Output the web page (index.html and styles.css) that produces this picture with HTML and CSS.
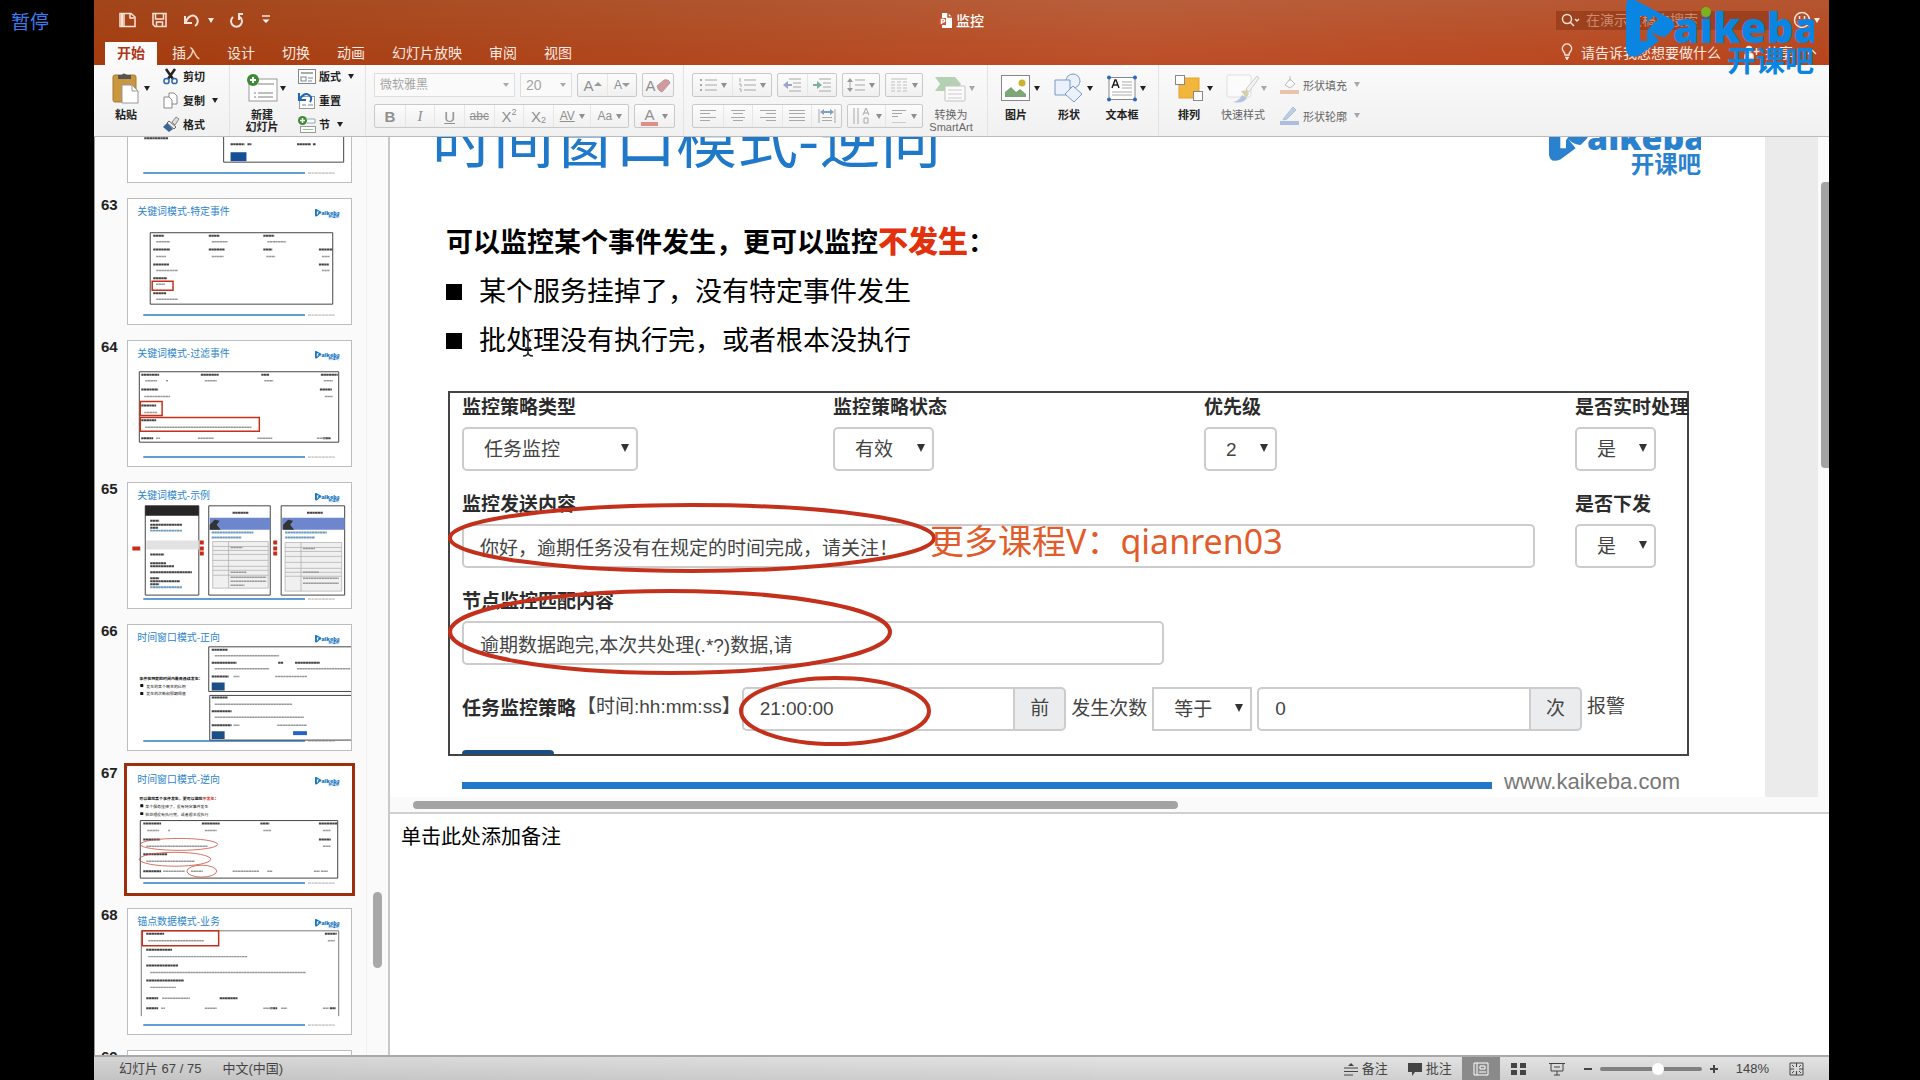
FILE: index.html
```html
<!DOCTYPE html>
<html lang="zh-CN">
<head>
  <meta charset="UTF-8" />
  <meta name="viewport" content="width=device-width, initial-scale=1.0"/>
  <title>监控</title>
  <link rel="stylesheet" href="styles.css">
</head>
<body>

<!-- Shared shapes -->
<svg class="defs" width="0" height="0" aria-hidden="true">
  <symbol id="logo" viewBox="0 0 188 76">
    <path fill-rule="evenodd" d="M0 6Q1-3 9 1L45 20Q52 26 45 32L39 38Q31 38 24 31L33 42L14 56Q1 61 0 50ZM14 17V42H21V32L24 28L32 20L28 17L21 24V17Z"/>
    <text class="logo-en" x="47" y="44">aikeba</text>
    <text class="logo-cn" x="188" y="73" text-anchor="end">开课吧</text>
  </symbol>
  <symbol id="mini" viewBox="0 0 224 126">
    <path d="M15 117H178" stroke="#2b7fc9" stroke-width="1.5"/>
    <path d="M181 117H208" stroke="#aaa" stroke-width="1" stroke-dasharray="3 .5"/>
    <svg x="188" y="10" width="25" height="10"><use href="#logo" fill="#1676c4"/></svg>
  </symbol>
</svg>

<span class="paused">暂停</span>

<div class="window">
  <header class="titlebar">
    <div class="title-row">
      <div class="quick">
        <button aria-label="侧栏"><svg width="17" height="16" viewBox="0 0 17 16"><path d="M1 1.500h11l4 3.500v9.500H1zM5 1.500v13"/><path d="M2 2h2v12H2z" fill="#fbe3da" stroke="none"/><path d="M11 2v4h4"/></svg></button>
        <button aria-label="保存"><svg width="17" height="16" viewBox="0 0 17 16"><path d="M2 1.500h13v13H4l-2-2zM4.500 2v5h8V2M5.500 14v-4h6v4"/></svg></button>
        <button aria-label="撤销"><svg width="17" height="16" viewBox="0 0 17 16"><path d="M2 4v7h7M2.500 10.500C5 4 10 2 13 5s2 7-1 9" stroke-width="2"/></svg><i class="caret"></i></button>
        <button aria-label="重做"><svg width="16" height="16" viewBox="0 0 16 16"><path d="M4 5a5.500 5.500 0 1 0 7 0M10 8V2h4" stroke-width="2"/></svg></button>
        <button aria-label="自定义"><svg width="12" height="12" viewBox="0 0 12 12"><path d="M2 2h8" /><path d="M2.500 5.500h7L6 9z" fill="#fff" stroke="none"/></svg></button>
      </div>
      <div class="doc-name">
        <svg width="13" height="15" viewBox="0 0 13 15"><path d="M3 0h6l4 4v11H3z" fill="#fff"/><path d="M9 0v4h4" fill="none" stroke="#b5532c"/><path d="M0 5h7v7H0z" fill="#d35230"/><path d="M2.500 11V6.500h2a1.200 1.200 0 0 1 0 2.500h-2" fill="none" stroke="#fff"/></svg>
        监控
      </div>
      <div class="side">
        <label class="search">
          <svg width="20" height="14" viewBox="0 0 20 14"><circle cx="6" cy="6" r="4.500"/><path d="M9 9l4 4M14 6l2 2 2-2"/></svg>
          <input type="text" placeholder="在演示文稿中搜索" aria-label="搜索">
        </label>
        <button aria-label="反馈"><svg width="18" height="18" viewBox="0 0 18 18"><circle cx="9" cy="9" r="7.500"/><path d="M6.500 5v3M11.500 5v3M5 10.500q4 4 8 0"/></svg><i class="caret"></i></button>
      </div>
    </div>
    <div class="tab-row">
      <nav class="tabs">
        <button class="active">开始</button>
        <button>插入</button>
        <button>设计</button>
        <button>切换</button>
        <button>动画</button>
        <button>幻灯片放映</button>
        <button>审阅</button>
        <button>视图</button>
      </nav>
      <div class="side">
        <button class="tell"><svg width="12" height="17" viewBox="0 0 12 17"><path d="M4 12Q4 10 2.500 8.500A4.600 4.600 0 1 1 9.500 8.500Q8 10 8 12ZM4 14.500h4M5 16h2"/></svg>请告诉我您想要做什么</button>
        <button class="share"><svg width="16" height="14" viewBox="0 0 16 14"><circle cx="5" cy="4" r="2.500" fill="#fff"/><path d="M1 13v-2q0-3 4-3t4 3v2z" fill="#fff"/><path d="M12.500 3v7M9.500 6.500h6"/></svg>共享</button>
        <button aria-label="折叠功能区"><svg width="10" height="8" viewBox="0 0 10 8"><path d="M1 6l4-4 4 4"/></svg></button>
      </div>
    </div>
  </header>

  <div class="ribbon">
    <div class="group">
      <button class="big">
        <svg width="28" height="32" viewBox="0 0 28 32"><rect x="1" y="3" width="23" height="27" rx="2" fill="#c8973f" stroke="#a67a2c"/><path d="M6 7V3h4q1-3 5 0h4v4z" fill="#555"/><path d="M10 13h10l6 6v12H10z" fill="#fff" stroke="#999"/><path d="M20 13v6h6" fill="none" stroke="#999"/></svg>
        <i class="caret"></i><span>粘贴</span>
      </button>
      <div class="stack">
        <button><svg width="18" height="17" viewBox="0 0 18 17"><path d="M4 1l7 10M13 1L6 11" stroke="#222" stroke-width="2.500" fill="none"/><circle cx="4.500" cy="13" r="2.600" fill="none" stroke="#2c67ae" stroke-width="1.500"/><circle cx="12.500" cy="13" r="2.600" fill="none" stroke="#2c67ae" stroke-width="1.500"/></svg>剪切</button>
        <button><svg width="18" height="17" viewBox="0 0 18 17"><path d="M7 1h5l3 3v8H7z" fill="#fff" stroke="#888"/><path d="M2 5h5l3 3v8H2z" fill="#fff" stroke="#888"/></svg>复制<i class="caret"></i></button>
        <button><svg width="18" height="17" viewBox="0 0 18 17"><path d="M10 6l4-5 3 2-4 6z" fill="#ddd" stroke="#888"/><path d="M7 5l7 6-2 2-7-6z" fill="#eee" stroke="#666"/><path d="M5 7l6 6-4 3-6-5z" fill="#3d6498"/></svg>格式</button>
      </div>
    </div>
    <div class="group group-slides">
      <button class="big">
        <svg width="32" height="30" viewBox="0 0 32 30"><rect x="3" y="6" width="28" height="22" fill="#fff" stroke="#999"/><path d="M12 11h16M8 20h2M12 20h15M8 24h2M12 24h15" stroke="#aaa" stroke-width="1.500"/><circle cx="7" cy="7" r="6" fill="#3f8a35"/><path d="M7 4v6M4 7h6" stroke="#fff" stroke-width="2"/></svg>
        <i class="caret"></i><span>新建<br>幻灯片</span>
      </button>
      <div class="stack">
        <button><svg width="18" height="15" viewBox="0 0 18 15"><rect x=".5" y=".5" width="17" height="14" fill="#fff" stroke="#888"/><path d="M3 4h12" stroke="#aaa" stroke-width="2"/><rect x="3" y="8" width="5" height="4" fill="none" stroke="#789"/><path d="M10 9h5M10 12h4" stroke="#789"/></svg>版式<i class="caret"></i></button>
        <button><svg width="18" height="17" viewBox="0 0 18 17"><rect x="1.500" y="4.500" width="15" height="12" fill="#fff" stroke="#999"/><path d="M4 13h4M10 13h5" stroke="#789"/><path d="M1 1v7h7M2 7q4-7 9-4 4 3 1 7" fill="none" stroke="#1f66b5" stroke-width="2"/></svg>重置</button>
        <button><svg width="18" height="17" viewBox="0 0 18 17"><path d="M9 3h8v4H9" fill="#fff" stroke="#8ab"/><rect x="2.500" y="10.500" width="15" height="6" fill="#fff" stroke="#999"/><path d="M5 13.500h10" stroke="#8c8"/><circle cx="4.500" cy="4.500" r="4.500" fill="#3f8a35"/><path d="M4.500 2v5M2 4.500h5" stroke="#fff" stroke-width="1.500"/></svg>节<i class="caret"></i></button>
      </div>
    </div>

    <div class="group group-font">
      <div class="rows">
        <div class="row">
          <span class="pick pick-font"><select aria-label="字体"><option>微软雅黑</option></select></span>
          <span class="pick pick-size"><select aria-label="字号"><option>20</option></select></span>
          <div class="seg seg-60">
            <button aria-label="增大字号">A<svg width="8" height="10" viewBox="0 0 8 10"><path d="M0 6l4-4 4 4z" fill="#999" stroke="none"/></svg></button>
            <button class="small" aria-label="减小字号">A<svg width="8" height="10" viewBox="0 0 8 10"><path d="M0 3l4 4 4-4z" fill="#999" stroke="none"/></svg></button>
          </div>
          <div class="seg seg-32"><button class="clear" aria-label="清除格式">A<svg width="15" height="15" viewBox="0 0 15 15"><path d="M1 8l7-6q5-1 6 3l-8 9q-4-1-5-6z" fill="#cf9aa0" stroke="#b99"/></svg></button></div>
        </div>
        <div class="row">
          <div class="seg seg-style">
            <button><b>B</b></button><button class="serif"><em>I</em></button><button><u>U</u></button><button><s>abc</s></button><button>X<sup>2</sup></button><button>X<sub>2</sub></button><button class="track"><u>AV</u><i class="caret"></i></button><button class="track">Aa<i class="caret"></i></button>
          </div>
          <div class="seg seg-color"><button class="color"><span>A</span><i class="caret"></i></button></div>
        </div>
      </div>
    </div>

    <div class="group group-para">
      <div class="rows">
        <div class="row">
          <div class="seg seg-80">
            <button aria-label="项目符号"><svg width="18" height="16" viewBox="0 0 18 16"><path d="M6 3h12M6 8h12M6 13h12"/><path d="M1 3h2M1 8h2M1 13h2" stroke-width="2"/></svg><i class="caret"></i></button>
            <button aria-label="编号"><svg width="18" height="16" viewBox="0 0 18 16"><path d="M6 3h12M6 8h12M6 13h12M2 1v4M1 7h2v3M1 12h2v3"/></svg><i class="caret"></i></button>
          </div>
          <div class="seg seg-60">
            <button aria-label="减少缩进"><svg width="18" height="16" viewBox="0 0 18 16"><path d="M6 2h12M10 6h8M10 10h8M6 14h12"/><path d="M0 8l5-4v3h4v2H5v3z" fill="#99a6cf" stroke="none"/></svg></button>
            <button aria-label="增加缩进"><svg width="18" height="16" viewBox="0 0 18 16"><path d="M6 2h12M10 6h8M10 10h8M6 14h12"/><path d="M9 8L4 4v3H0v2h4v3z" fill="#7fae9c" stroke="none"/></svg></button>
          </div>
          <div class="seg seg-38"><button aria-label="行距"><svg width="18" height="16" viewBox="0 0 18 16"><path d="M8 3h10M8 8h10M8 13h10M3 2v12"/><path d="M0 5l3-4 3 4zM0 11l3 4 3-4z" fill="#999" stroke="none"/></svg><i class="caret"></i></button></div>
          <div class="seg seg-38"><button aria-label="分栏"><svg width="18" height="16" viewBox="0 0 18 16"><path d="M1 2h16M1 5h4M1 8h4M1 11h4M1 14h4M7 5h4M7 8h4M7 11h4M7 14h4M13 5h4M13 8h4M13 11h4M13 14h4" stroke="#c0c0c0"/></svg><i class="caret"></i></button></div>
        </div>
        <div class="row">
          <div class="seg seg-150">
            <button aria-label="左对齐"><svg width="16" height="14" viewBox="0 0 16 14"><path d="M0 1.500h16M0 4.500h10M0 8.500h16M0 11.500h10"/></svg></button>
            <button aria-label="居中"><svg width="16" height="14" viewBox="0 0 16 14"><path d="M1 1.500h14M3 4.500h10M1 8.500h14M3 11.500h10"/></svg></button>
            <button aria-label="右对齐"><svg width="16" height="14" viewBox="0 0 16 14"><path d="M0 1.500h16M6 4.500h10M0 8.500h16M6 11.500h10"/></svg></button>
            <button aria-label="两端对齐"><svg width="16" height="14" viewBox="0 0 16 14"><path d="M0 1.500h16M0 4.500h16M0 8.500h16M0 11.500h16"/></svg></button>
            <button aria-label="分散对齐"><svg width="18" height="16" viewBox="0 0 18 16"><path d="M1 1v14M17 1v14M4 9.500h10M4 12.500h10"/><path d="M2 4l4-3v2h6V1l4 3-4 3V5H6v2z" fill="#7f9fc4" stroke="none"/></svg></button>
          </div>
          <div class="seg seg-76">
            <button aria-label="文字方向"><svg width="20" height="18" viewBox="0 0 20 18"><path d="M2 1v16M6 1v16M11 8l3-7 3 7M12 6h4M12 11h4v5h-4z"/></svg><i class="caret"></i></button>
            <button aria-label="对齐文本"><svg width="16" height="16" viewBox="0 0 16 16"><path d="M1 2.500h14M1 5.500h10M1 8.500h6"/><path d="M1 14.500h14" stroke="#ccc"/></svg><i class="caret"></i></button>
          </div>
        </div>
      </div>
      <button class="big off">
        <svg width="32" height="28" viewBox="0 0 32 28"><path d="M0 3h20l6 7-6 7H0l5-7z" fill="#7fb07a"/><rect x="10" y="12" width="20" height="15" rx="1" fill="#fff" stroke="#999"/><path d="M13 16h14M13 20h14M13 24h14" stroke="#aaa"/></svg>
        <i class="caret"></i><span>转换为<br>SmartArt</span>
      </button>
    </div>

    <div class="group">
      <button class="big">
        <svg width="30" height="27" viewBox="0 0 30 27"><rect x=".5" y=".5" width="28" height="25" fill="#fff" stroke="#888"/><path d="M4 22v-5l6-5 5 5 4-3 6 5v3z" fill="#7fa676"/><circle cx="21" cy="8" r="3.500" fill="#cdb430"/></svg>
        <i class="caret"></i><span>图片</span>
      </button>
      <button class="big">
        <svg width="30" height="30" viewBox="0 0 30 30"><g fill="#eaf1fb" stroke="#7d97c9"><circle cx="19" cy="8" r="7"/><path d="M1 7h15v15H1z"/><path d="M19 13l9 8-8 8-9-8z"/></g></svg>
        <i class="caret"></i><span>形状</span>
      </button>
      <button class="big">
        <svg width="30" height="27" viewBox="0 0 30 27"><rect x="2" y="2.500" width="26" height="22" fill="#fff" stroke="#888"/><path d="M5 13l3-8h1l3 8M6 10h5" stroke="#222" stroke-width="1.500" fill="none"/><path d="M15 7h10M15 10h10M15 13h10M5 17h20M5 20h20" stroke="#aaa"/><g fill="#2b68bb"><circle cx="2" cy="2.500" r="2"/><circle cx="28" cy="2.500" r="2"/><circle cx="2" cy="24.500" r="2"/><circle cx="28" cy="24.500" r="2"/></g></svg>
        <i class="caret"></i><span>文本框</span>
      </button>
    </div>

    <div class="group last">
      <button class="big">
        <svg width="30" height="28" viewBox="0 0 30 28"><rect x="5" y="4" width="20" height="20" fill="#f2b63c" stroke="#e3a32a"/><rect x="1.500" y="1.500" width="9" height="9" fill="#fff" stroke="#888"/><rect x="19.500" y="17.500" width="9" height="9" fill="#fff" stroke="#888"/></svg>
        <i class="caret"></i><span>排列</span>
      </button>
      <button class="big off">
        <svg width="34" height="30" viewBox="0 0 34 30"><rect x="1" y="2" width="24" height="22" rx="2" fill="#fff" stroke="#ccc"/><path d="M20 16L31 3l2 2-10 14z" fill="#eee" stroke="#aaa"/><path d="M15 18l6-1 2 4-3 4z" fill="#b9b36a"/><path d="M7 29q6-1 9-7l5 3q-4 6-14 4z" fill="#7f9bd0"/></svg>
        <i class="caret"></i><span>快速样式</span>
      </button>
      <div class="stack two off">
        <button><svg width="20" height="20" viewBox="0 0 20 20"><path d="M5 10l5-6 5 5-5 4z" fill="#fff" stroke="#888"/><path d="M10 1v5" stroke="#888"/><rect x="0" y="15" width="19" height="4" fill="#e09a72"/></svg>形状填充<i class="caret"></i></button>
        <button><svg width="20" height="20" viewBox="0 0 20 20"><path d="M4 12L13 1l3 3-9 9-4 1z" fill="#8ab0dd" stroke="#79a"/><rect x="0" y="15" width="19" height="4" fill="#7593cc"/></svg>形状轮廓<i class="caret"></i></button>
      </div>
    </div>
  </div>

  <main class="workspace">
    <aside class="sidebar">
      <ol class="thumbs">
        <li>
          <span class="num"></span>
          <svg class="thumb" viewBox="0 0 224 126"><use href="#mini"/>
            <path class="frame" d="M96 60H217V106H96z"/><path class="tx" d="M103 88h14M120 88h4M170 88h14M186 88h3M16 82h24"/><rect x="103" y="96" width="16" height="9" fill="#174f96"/>
          </svg>
        </li>
        <li>
          <span class="num">63</span>
          <svg class="thumb" viewBox="0 0 224 126"><use href="#mini"/>
            <text x="9" y="16">关键词模式-特定事件</text>
            <path class="frame" d="M22 34H206V106H22z"/>
            <path class="tx" d="M25 37h11M81 37h11M136 37h11M25 51h17M81 51h16M136 51h9M192 51h14M25 66h16M192 66h10M25 80h14M25 95h13"/>
            <path class="tx light" d="M28 43h14M84 43h16M140 43h19M28 58h10M84 58h12M139 58h9M195 58h8M28 72h22M195 72h8M28 86h9M28 101h22"/>
            <path class="red" d="M24 83H45V92H24z"/>
          </svg>
        </li>
        <li>
          <span class="num">64</span>
          <svg class="thumb" viewBox="0 0 224 126"><use href="#mini"/>
            <text x="9" y="16">关键词模式-过滤事件</text>
            <path class="frame" d="M11 31H212V102H11z"/>
            <path class="tx" d="M13 34h18M73 34h18M134 34h8M194 34h17M13 49h17M193 49h12M13 65h15M13 80h15M13 98h12M196 98h8"/>
            <path class="tx light" d="M17 40h12M38 40h2M77 40h12M137 40h9M197 40h9M16 56h26M198 56h8M16 72h13M17 87h107M28 98h4M70 98h16M130 98h15M190 98h9"/>
            <path class="red" d="M12 61H34V75H12zM12 77H132V91H12z"/>
          </svg>
        </li>
        <li>
          <span class="num">65</span>
          <svg class="thumb" viewBox="0 0 224 126"><use href="#mini"/>
            <text x="9" y="16">关键词模式-示例</text>
            <g class="frame"><path d="M17 23H71V113H17z"/><path d="M81 23H143V113H81z"/><path d="M154 23H218V113H154z"/></g>
            <path d="M17 23H71V33H17z" fill="#262626"/>
            <path d="M18 58H71V67H18z" fill="#e2e2e2"/>
            <path d="M82 35H143V47H82zM155 35H218V47H155z" fill="#6d86cd"/>
            <path d="M82 47V42l5-5 5 1-3 4 4 5zM156 47V42l5-5 5 1-3 4 4 5z" fill="#333"/>
            <path class="tx" d="M22 38h9M22 42h32M22 45h8M22 72h14M22 81h16M22 84h24M22 90h42M22 96h9M22 99h30M22 102h9M105 30h16M180 30h16"/>
            <path class="tx blue" d="M22 48h32M22 105h32M84 50h42M84 55h30M158 50h42M158 55h30"/>
            <g fill="#f0f0f0" stroke="#aaa" stroke-width=".7"><path d="M85 59H141V106H85zM158 60H215V109H158z"/><path d="M85 64h56M85 68h56M85 72h56M85 78h56M85 84h56M85 88h56M85 93h56M101 59v47M158 65h57M158 69h57M158 74h57M158 80h57M158 86h57M158 90h57M158 94h57M174 60v49"/></g>
            <path class="tx light" d="M103 65h12M103 90h16M103 95h36M103 99h36M103 103h14M176 66h12M176 90h16M176 96h36M176 101h36"/>
            <path d="M4 66h8M72 60h4M72 66h4M72 71h4M146 60h4M146 66h4M146 71h4" stroke="#c62d1c" stroke-width="4"/>
          </svg>
        </li>
        <li>
          <span class="num">66</span>
          <svg class="thumb" viewBox="0 0 224 126"><use href="#mini"/>
            <text x="9" y="16">时间窗口模式-正向</text>
            <path class="frame" d="M226 22H81V67H226M226 71H82V116H226"/>
            <text class="tiny" x="11" y="55"><tspan font-weight="bold">事件在特定的时间内是否连续发生：</tspan></text>
            <text class="tiny" x="18" y="63">发生的某个概率的比例</text>
            <text class="tiny" x="18" y="71">发生的次数和预期阈值</text>
            <path class="tx" d="M84 25h16M84 38h25M151 38h5M168 38h25M84 52h17M84 73h16M84 87h20M84 101h20"/>
            <path d="M12 61h3M12 69h3" stroke="#111" stroke-width="3"/>
            <path class="tx light" d="M87 31h65M87 44h55M170 44h54M106 52h6M148 52h32M87 80h78M87 93h90M106 101h6M150 101h30"/>
            <path d="M84 58H97V66H84zM84 107H97V115H84z" fill="#1c4f86"/><path d="M166 107h14v4h-14z" fill="#2564c4"/>
          </svg>
        </li>
        <li class="current">
          <span class="num">67</span>
          <svg class="thumb" viewBox="0 0 224 126"><use href="#mini"/>
            <text x="9" y="16">时间窗口模式-逆向</text>
            <text class="tiny" x="11" y="33"><tspan font-weight="bold">可以监控某个事件发生，更可以监控<tspan fill="#d6301c">不发生</tspan>：</tspan></text>
            <text class="tiny" x="17" y="41">某个服务挂掉了，没有特定事件发生</text>
            <text class="tiny" x="17" y="49">批处理没有执行完，或者根本没执行</text>
            <path d="M12 39h3M12 47h3" stroke="#111" stroke-width="3"/>
            <path class="frame" d="M12 54H211V112H12z"/>
            <path class="tx" d="M15 57h18M74 57h18M133 57h9M192 57h19M15 73h17M192 73h12M15 88h24M15 105h18"/>
            <path class="tx light" d="M19 64h12M40 64h2M77 64h12M136 64h8M196 64h8M18 80h62M196 80h8M18 95h49M35 105h22M63 105h12M105 105h27M140 105h5M187 105h6M194 105h7"/>
            <g fill="none" stroke="#c8503f" stroke-width=".8"><ellipse cx="51" cy="78" rx="39" ry="6"/><ellipse cx="47" cy="93" rx="36" ry="7"/><ellipse cx="74" cy="105" rx="15" ry="6"/></g>
          </svg>
        </li>
        <li>
          <span class="num">68</span>
          <svg class="thumb" viewBox="0 0 224 126"><use href="#mini"/>
            <text x="9" y="16">锚点数据模式-业务</text>
            <path d="M13 108V22H212V108" fill="none" stroke="#777"/>
            <path class="tx" d="M18 25h18M198 25h12M18 41h26M18 57h32M18 72h38M18 90h12M92 90h18M18 100h12M143 100h7M203 100h6"/>
            <path class="tx light" d="M20 32h56M201 32h7M20 48h100M22 64h157M22 79h26M34 90h28M33 100h4M77 100h12M136 100h10M154 100h6M196 100h6"/>
            <path class="red" d="M14 22H91V37H14z"/>
          </svg>
        </li>
        <li>
          <span class="num">69</span>
          <svg class="thumb" viewBox="0 0 224 126"><use href="#mini"/></svg>
        </li>
      </ol>
      <div class="track-v"><i></i></div>
    </aside>

    <section class="editor">
      <div class="canvas">
        <article class="slide">
          <div class="slide-head">
            <h1>时间窗口模式-逆向</h1>
            <svg class="slide-logo" viewBox="0 0 188 76"><use href="#logo"/></svg>
          </div>
          <h2>可以监控某个事件发生，更可以监控<strong>不发生</strong>：</h2>
          <ul>
            <li>某个服务挂掉了，没有特定事件发生</li>
            <li>批处理没有执行完，或者根本没执行</li>
          </ul>

          <form class="policy">
            <div class="field">
              <label for="type">监控策略类型</label>
              <span class="select w-type"><select id="type"><option>任务监控</option></select></span>
            </div>
            <div class="field">
              <label for="state">监控策略状态</label>
              <span class="select w-state"><select id="state"><option>有效</option></select></span>
            </div>
            <div class="field">
              <label for="level">优先级</label>
              <span class="select w-level"><select id="level"><option>2</option></select></span>
            </div>
            <div class="field">
              <label for="realtime">是否实时处理</label>
              <span class="select w-yes"><select id="realtime"><option>是</option></select></span>
            </div>
            <div class="field span-3">
              <label for="content">监控发送内容</label>
              <input id="content" type="text" value="你好，逾期任务没有在规定的时间完成，请关注！">
            </div>
            <div class="field">
              <label for="send">是否下发</label>
              <span class="select w-yes"><select id="send"><option>是</option></select></span>
            </div>
            <div class="field span-2">
              <label for="match">节点监控匹配内容</label>
              <input id="match" type="text" value="逾期数据跑完,本次共处理(.*?)数据,请">
            </div>
            <div class="inline">
              <label for="time">任务监控策略</label>
              <span class="hint">【时间:hh:mm:ss】</span>
              <div class="addon"><input id="time" type="text" value="21:00:00"><span>前</span></div>
              <label class="plain" for="op">发生次数</label>
              <span class="select square w-op"><select id="op"><option>等于</option></select></span>
              <div class="addon"><input type="text" value="0" aria-label="次数"><span>次</span></div>
              <span class="hint">报警</span>
            </div>
            <div class="submit-edge"></div>
            <svg class="marks" viewBox="0 0 1241 364">
              <ellipse cx="244" cy="147" rx="242" ry="33"/>
              <ellipse cx="222" cy="241" rx="220" ry="41"/>
              <ellipse cx="387" cy="320" rx="94" ry="33"/>
            </svg>
            <span class="promo">更多课程V：qianren03</span>
          </form>

          <footer class="slide-foot"><i></i><span>www.kaikeba.com</span></footer>
          <svg class="ibeam" width="12" height="28" viewBox="0 0 12 28"><path d="M1 1q5 0 5 4v18q0 4-5 4M11 1q-5 0-5 4M11 27q-5 0-5-4M3 19h6"/></svg>
        </article>
        <div class="track-canvas"><i></i></div>
      </div>
      <div class="track-h"><i></i></div>
      <div class="notes">单击此处添加备注</div>
    </section>
  </main>

  <footer class="status">
    <span>幻灯片 67 / 75</span>
    <span class="lang">中文(中国)</span>
    <div class="status-right">
      <button><svg width="14" height="14" viewBox="0 0 14 14"><path d="M0 6h14M0 9.500h14M0 13h9"/><path d="M4 4l3-3 3 3z" fill="#444" stroke="none"/></svg>备注</button>
      <button><svg width="14" height="14" viewBox="0 0 14 14"><path d="M0 1h14v9H7l-3 4v-4H0z" fill="#444" stroke="none"/></svg>批注</button>
      <div class="views">
        <button class="on" aria-label="普通视图"><svg width="16" height="14" viewBox="0 0 16 14"><path d="M1 1h14v12H1zM4 1v12M7 4h5v3H7zM6 10h7"/></svg></button>
        <button aria-label="浏览视图"><svg width="16" height="14" viewBox="0 0 16 14"><path d="M0 1h6v5H0zM9 1h6v5H9zM0 8h6v5H0zM9 8h6v5H9z" fill="#444" stroke="none"/></svg></button>
        <button aria-label="放映"><svg width="16" height="14" viewBox="0 0 16 14"><path d="M0 1.500h16M2 2v7h12V2M5 5h6M8 9v4M5 13h6"/></svg></button>
      </div>
      <button class="zoom-step" aria-label="缩小"><svg width="10" height="10" viewBox="0 0 10 10"><path d="M1 5h8" stroke-width="2"/></svg></button>
      <input type="range" min="0" max="100" value="58" aria-label="缩放">
      <button class="zoom-step" aria-label="放大"><svg width="10" height="10" viewBox="0 0 10 10"><path d="M1 5h8M5 1v8" stroke-width="2"/></svg></button>
      <span class="percent">148%</span>
      <button aria-label="适应窗口"><svg width="15" height="14" viewBox="0 0 15 14"><path d="M1 1h13v12H1zM7.500 1v4M7.500 9v4M1 7h4M10 7h4M3 3l2 2M12 3l-2 2M3 11l2-2M12 11l-2-2"/></svg></button>
    </div>
  </footer>
</div>

<svg class="watermark" viewBox="0 0 188 76"><use href="#logo"/><circle cx="80" cy="13" r="5"/></svg>

</body>
</html>
```
FILE: styles.css
```css
:root {
  --blue: #1f78c8;
  --red: #c3311c;
  --line: #ccc;
}

* {
  box-sizing: border-box;
}

body {
  margin: 0;
  height: 100vh;
  padding: 0 91px 0 94px;
  background: #000;
  font-family: "Liberation Sans", "Noto Sans CJK SC", sans-serif;
  font-size: 14px;
  color: #222;
  overflow: hidden;
}

button,
input,
select {
  font: inherit;
  color: inherit;
  margin: 0;
  padding: 0;
  border: none;
  background: none;
  outline: none;
}

button {
  display: flex;
  align-items: center;
}

select {
  appearance: none;
}

svg {
  flex: none;
}

.defs {
  position: absolute;
}

.paused {
  position: absolute;
  left: 11px;
  top: 10px;
  font-size: 19px;
  line-height: 26px;
  color: #3d7bea;
}

.window {
  display: flex;
  flex-direction: column;
  height: 100%;
  background: #fff;
}

.caret {
  width: 0;
  height: 0;
  border: 3px solid transparent;
  border-top: 5px solid currentColor;
  border-bottom: none;
}

/* Title bar */
.titlebar {
  color: #fbe9e2;
  background: linear-gradient(to right, rgba(140, 50, 0, 0.45), rgba(255, 255, 255, 0.06) 60%, transparent), linear-gradient(#b4552f, #b9431a);
}

.titlebar svg {
  fill: none;
  stroke: #fbe3da;
  stroke-width: 1.5;
}

.title-row {
  display: grid;
  grid-template-columns: 1fr auto 1fr;
  align-items: center;
  height: 40px;
}

.quick {
  display: flex;
  align-items: center;
  gap: 15px;
  padding-left: 25px;
}

.quick button {
  gap: 8px;
}

.doc-name {
  display: flex;
  align-items: center;
  gap: 4px;
  font-weight: 500;
  color: #fff;
}

.doc-name svg {
  stroke: none;
}

.side {
  display: flex;
  align-items: center;
  justify-self: end;
  width: 273px;
}

.search {
  display: flex;
  align-items: center;
  gap: 5px;
  width: 221px;
  height: 19px;
  padding-left: 5px;
  margin-right: 16px;
  background: #9c401d;
}

.search input {
  width: 180px;
}

.search input::placeholder {
  color: #cf8b70;
}

.side button {
  gap: 3px;
}

.tab-row {
  display: flex;
  justify-content: space-between;
  align-items: flex-end;
  height: 25px;
}

.tabs {
  display: flex;
  gap: 3px;
  padding-left: 11px;
}

.tabs button {
  height: 23px;
  padding: 0 12px 3px;
}

.tabs .active {
  background: #fbfbfb;
  color: #b0371a;
  font-weight: bold;
}

.tab-row .side {
  height: 25px;
  padding-bottom: 2px;
}

.side .tell {
  gap: 8px;
  padding-left: 5px;
  margin-right: 23px;
}

.side .share {
  gap: 5px;
  margin-right: 14px;
}

/* Ribbon */
.ribbon {
  display: flex;
  height: 72px;
  background: linear-gradient(#fafafa, #f1f1f1);
  border-bottom: 1px solid #bbb;
  font-size: 11px;
}

.group {
  display: flex;
  gap: 11px;
  padding: 0 11px;
  border-right: 1px solid #e3e3e3;
}

.group:first-child,
.group-slides {
  padding-left: 15px;
}

.group-font {
  padding: 0 8px;
}

.group-para {
  padding-left: 8px;
}

.last {
  padding-left: 13px;
  gap: 12px;
  border-right: none;
}

.big {
  display: grid;
  grid-template-columns: 34px 8px;
  grid-template-rows: 34px 24px;
  row-gap: 4px;
  align-content: start;
  justify-items: center;
  align-items: center;
  padding-top: 6px;
  line-height: 12px;
  font-weight: bold;
  white-space: nowrap;
}

.big span {
  align-self: start;
}

.stack button {
  height: 24px;
  gap: 3px;
  padding-bottom: 2px;
  font-weight: bold;
}

.stack .caret {
  margin-left: 4px;
}

.two {
  padding-top: 5px;
}

.two button {
  height: 31px;
}

.big.off,
.off button {
  font-weight: 400;
  color: #666;
}

.off svg,
.off .caret {
  opacity: 0.55;
}

.rows {
  display: flex;
  flex-direction: column;
  gap: 7px;
  padding-top: 8px;
}

.row {
  display: flex;
  gap: 5px;
  height: 24px;
  color: #8f8f8f;
}

.pick {
  position: relative;
  border: 1px solid #dedede;
  background: #fafafa;
  font-size: 12px;
  color: #a5a5a5;
}

.pick select {
  width: 100%;
  height: 22px;
  padding-left: 5px;
}

.pick::after {
  content: "";
  position: absolute;
  right: 5px;
  top: 9px;
  border: 3px solid transparent;
  border-top: 4px solid #aaa;
  border-bottom: none;
}

.pick-font {
  width: 141px;
}

.pick-size {
  width: 52px;
  font-size: 14px;
}

.seg {
  display: flex;
  border: 1px solid #c9c9c9;
  border-radius: 2px;
  background: linear-gradient(#fcfcfc, #f0f0f0);
  font-size: 15px;
}

.seg button {
  flex: 1 1 30px;
  justify-content: center;
  border-left: 1px solid #e6e6e6;
}

.seg button:first-child {
  border-left: none;
}

.seg svg {
  fill: none;
  stroke: #a8a8a8;
}

.seg .caret {
  margin-left: 4px;
}

.seg sup,
.seg sub {
  font-size: 9px;
  line-height: 9px;
}

.seg sup {
  align-self: flex-start;
  padding-top: 3px;
}

.seg sub {
  align-self: flex-end;
  padding-bottom: 2px;
}

.seg .small,
.seg s,
.seg .track {
  font-size: 12px;
}

.seg .serif {
  font-family: "Liberation Serif", serif;
}

.seg-style {
  width: 255px;
}

.seg-style .track {
  flex-basis: 38px;
}

.seg-color {
  width: 41px;
}

.color span {
  padding: 0 3px;
  line-height: 15px;
  border-bottom: 4px solid #df8f88;
}

.seg-80 {
  width: 80px;
}

.seg-60 {
  width: 60px;
}

.seg-38 {
  width: 38px;
}

.seg-32 {
  width: 32px;
}

.seg-150 {
  width: 150px;
}

.seg-76 {
  width: 76px;
}

/* Workspace */
.workspace {
  display: flex;
  flex: 1;
  min-height: 0;
}

.sidebar {
  display: flex;
  justify-content: space-between;
  width: 296px;
  overflow: hidden;
  background: #fafafa;
  border-left: 1px solid #999;
  border-right: 2px solid #c9c9c9;
}

.thumbs {
  display: flex;
  flex-direction: column;
  gap: 15px;
  margin: -81px 0 0;
  padding: 0 0 0 6px;
  list-style: none;
}

.thumbs li {
  display: flex;
  height: 127px;
}

.num {
  width: 26px;
  font-size: 15px;
  line-height: 13px;
  font-weight: bold;
}

.thumb {
  width: 225px;
  height: 127px;
  background: #fff;
  border: 1px solid #bdbdbd;
}

.current .thumb {
  border-color: #fff;
  outline: 3px solid #9d2f0d;
}

.thumb text {
  font-size: 10px;
  fill: #2b84cc;
}

.thumb .tiny {
  font-size: 4px;
  fill: #111;
}

.frame {
  fill: none;
  stroke: #444;
}

.red {
  fill: none;
  stroke: #c3311c;
  stroke-width: 1.5;
}

.tx {
  stroke: #444;
  stroke-width: 2;
  stroke-dasharray: 2.4 0.3;
}

.light {
  stroke: #999;
  stroke-width: 1.5;
}

.blue {
  stroke: #6d9bbd;
}

.track-v {
  display: flex;
  align-items: flex-start;
  width: 22px;
  padding: 755px 0 0 6px;
  border-left: 1px solid #f0f0f0;
}

.track-v i {
  width: 9px;
  height: 76px;
  border-radius: 5px;
  background: #a8a8a8;
}

.editor {
  display: flex;
  flex-direction: column;
  flex: 1;
  min-width: 0;
}

.canvas {
  display: flex;
  flex: 1;
  min-height: 0;
  overflow: hidden;
  background: #ebebeb;
}

.slide {
  position: relative;
  flex: 1;
  margin: -30px 53px 0 0;
  padding: 0 76px 0 56px;
  background: #fff;
}

.slide-head {
  display: flex;
  justify-content: space-between;
  align-items: flex-start;
  height: 60px;
  margin: 0 -12px 0 -14px;
}

.slide h1 {
  margin: 0;
  font-family: "Noto Sans CJK SC", sans-serif;
  font-size: 61px;
  line-height: 60px;
  font-weight: 400;
  color: var(--blue);
}

.slide-logo {
  width: 152px;
  height: 62px;
  margin-top: 7px;
  fill: #2a82cf;
}

.logo-en {
  font: 800 42px "Open Sans", sans-serif;
}

.logo-cn {
  font: 700 29px "Noto Sans CJK SC", sans-serif;
}

.slide h2 {
  margin: 56px 0 9px;
  font-size: 27px;
  line-height: 40px;
  font-weight: bold;
  color: #000;
}

.slide h2 strong {
  font-size: 30px;
  line-height: 30px;
  color: #e3300d;
}

.slide ul {
  display: flex;
  flex-direction: column;
  gap: 9px;
  margin: 0;
  padding: 0;
  list-style: none;
  font-size: 27px;
  line-height: 40px;
  color: #000;
}

.slide li {
  display: flex;
  align-items: center;
  gap: 17px;
}

.slide li::before {
  content: "";
  width: 16px;
  height: 16px;
  background: #000;
}

.policy {
  position: relative;
  display: grid;
  grid-template-columns: repeat(3, 1fr) 112px;
  row-gap: 19px;
  margin: 30px 0 0 2px;
  padding-left: 12px;
  border: 2px solid #444;
  font-size: 19px;
  color: #444;
}

.field {
  display: flex;
  flex-direction: column;
  align-items: flex-start;
  gap: 4px;
  white-space: nowrap;
}

.policy label {
  line-height: 30px;
  font-weight: bold;
  color: #2c2c2c;
}

.span-3 {
  grid-column: span 3;
  padding-right: 40px;
}

.span-2 {
  grid-column: span 2;
  padding-right: 40px;
}

.policy input {
  width: 100%;
  height: 44px;
  padding-left: 16px;
  border: 2px solid var(--line);
  border-radius: 5px;
}

.select {
  position: relative;
}

.select select {
  width: 100%;
  height: 44px;
  padding-left: 20px;
  border: 2px solid var(--line);
  border-radius: 5px;
}

.select::after {
  content: "";
  position: absolute;
  right: 9px;
  top: 17px;
  border: 4px solid transparent;
  border-top: 8px solid #333;
  border-bottom: none;
}

.square select {
  border-radius: 0;
}

.w-type {
  width: 176px;
}

.w-state {
  width: 101px;
}

.w-level {
  width: 73px;
}

.w-yes {
  width: 81px;
}

.w-op {
  flex: none;
  width: 100px;
}

.inline {
  grid-column: 1 / -1;
  display: flex;
  align-items: center;
  gap: 5px;
  margin-top: 3px;
  padding-right: 62px;
  white-space: nowrap;
}

.inline .hint {
  line-height: 30px;
  padding-bottom: 4px;
}

.inline .hint:nth-child(2) {
  margin: 0 -4px;
}

.policy .plain {
  font-weight: 400;
  color: #444;
}

.addon {
  display: flex;
  flex: 1;
  min-width: 0;
}

.addon input {
  min-width: 0;
  border-right: none;
  border-radius: 5px 0 0 5px;
}

.addon span {
  flex: none;
  width: 53px;
  line-height: 40px;
  text-align: center;
  background: #ebecee;
  border: 2px solid var(--line);
  border-radius: 0 5px 5px 0;
}

.submit-edge {
  width: 92px;
  height: 4px;
  border-radius: 4px 4px 0 0;
  background: #174f86;
}

.marks {
  position: absolute;
  left: -2px;
  top: -2px;
  width: 1241px;
  height: 364px;
  fill: none;
  stroke: var(--red);
  stroke-width: 4;
}

.promo {
  position: absolute;
  left: 480px;
  top: 123px;
  font-family: "Noto Sans", "Noto Sans CJK SC", sans-serif;
  font-size: 34px;
  line-height: 50px;
  color: #e25c2b;
}

.slide-foot {
  display: flex;
  align-items: center;
  gap: 12px;
  height: 26px;
  margin: 16px 9px 0 16px;
}

.slide-foot i {
  flex: 1;
  height: 7px;
  background: var(--blue);
}

.slide-foot span {
  padding-bottom: 6px;
  font-size: 22px;
  line-height: 26px;
  color: #777;
}

.ibeam {
  position: absolute;
  left: 132px;
  top: 222px;
  fill: none;
  stroke: #222;
  stroke-width: 1.5;
}

.track-canvas {
  width: 11px;
  padding: 45px 0 0 3px;
  background: #fafafa;
}

.track-canvas i {
  display: block;
  height: 286px;
  border-radius: 4px 0 0 4px;
  background: #a3a3a3;
}

.track-h {
  height: 17px;
  padding: 4px 0 0 23px;
  background: #fafafa;
  border-bottom: 2px solid #d0d0d0;
}

.track-h i {
  display: block;
  width: 54%;
  height: 8px;
  border-radius: 4px;
  background: #a3a3a3;
}

.notes {
  height: 241px;
  padding: 9px 11px;
  font-size: 20px;
  line-height: 28px;
  color: #000;
}

/* Status bar */
.status {
  display: flex;
  align-items: center;
  height: 25px;
  padding-left: 25px;
  background: linear-gradient(to right, rgba(0, 0, 0, 0.06), transparent 60%), linear-gradient(#e2e2e2, #cfcfcf);
  border-top: 2px solid #a9a9a9;
  font-size: 13px;
  line-height: 20px;
  color: #444;
}

.lang {
  margin-left: 21px;
}

.status svg {
  fill: none;
  stroke: #444;
}

.status-right {
  display: flex;
  align-items: center;
  height: 100%;
  margin-left: auto;
  padding-right: 25px;
}

.status-right > button {
  gap: 4px;
  margin-left: 20px;
}

.views {
  display: flex;
  height: 100%;
  margin-left: 10px;
}

.views button {
  justify-content: center;
  width: 38px;
  height: 100%;
}

.views .on {
  background: #8a8a8a;
}

.views .on svg {
  stroke: #fff;
}

.status-right .zoom-step {
  margin-left: 7px;
}

.status-right input {
  appearance: none;
  width: 102px;
  height: 4px;
  margin-left: 7px;
  border-radius: 2px;
  background: #808080;
}

.status-right input::-webkit-slider-thumb {
  appearance: none;
  width: 12px;
  height: 12px;
  border-radius: 50%;
  background: #fff;
}

.percent {
  margin-left: 17px;
}

/* Corner logo over the window */
.watermark {
  position: absolute;
  top: -1px;
  right: 106px;
  width: 188px;
  height: 76px;
  fill: #0a86e2;
}

.watermark circle {
  fill: #7fae1e;
}
```
